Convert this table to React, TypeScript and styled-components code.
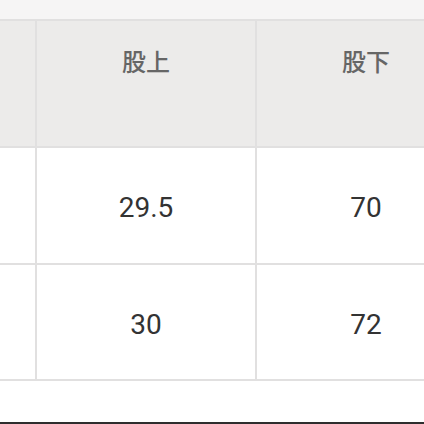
import React from "react";
import styled, { createGlobalStyle } from "styled-components";

const Global = createGlobalStyle`
  html, body { margin: 0; padding: 0; background: #ffffff; }
  body { width: 424px; height: 424px; overflow: hidden; font-family: Roboto, "Noto Sans CJK JP", sans-serif; }
`;

const Page = styled.div`
  width: 424px;
  height: 424px;
  display: flex;
  flex-direction: column;
  overflow: hidden;
  background: #ffffff;
`;

const TopStrip = styled.div`
  height: 19px;
  flex: none;
  background: #f6f5f5;
`;

const Viewport = styled.div`
  flex: none;
  overflow: hidden;
  width: 424px;
`;

const Grid = styled.div`
  display: grid;
  grid-template-columns: 218px 218px 218px;
  grid-template-rows: 125px 115px 114px;
  gap: 2px;
  padding: 2px 0;
  margin-left: -183px;
  width: max-content;
  background: #e1e0e0;
`;

const Cell = styled.div<{ $head?: boolean }>`
  display: flex;
  align-items: center;
  justify-content: center;
  background: ${(p) => (p.$head ? "#ecebea" : "#ffffff")};
  color: ${(p) => (p.$head ? "#666666" : "#333333")};
  font-family: ${(p) => (p.$head ? '"Noto Sans CJK JP", sans-serif' : 'Roboto, sans-serif')};
  font-weight: ${(p) => (p.$head ? 500 : 400)};
  font-size: ${(p) => (p.$head ? "24px" : "28px")};
  padding-bottom: ${(p) => (p.$head ? "46px" : "0")};
  padding-top: ${(p) => (p.$head ? "0" : "4px")};
  box-sizing: border-box;
`;

const Filler = styled.div`
  flex: 1;
  background: #ffffff;
`;

const BottomEdge = styled.div`
  height: 2px;
  flex: none;
  background: #2e2e2e;
`;

const rows = [
  ["", "股上", "股下"],
  ["", "29.5", "70"],
  ["", "30", "72"],
];

export default function App() {
  return (
    <>
      <Global />
      <Page>
        <TopStrip />
        <Viewport>
          <Grid>
            {rows.map((r, i) =>
              r.map((c, j) => (
                <Cell key={`${i}-${j}`} $head={i === 0}>
                  {c}
                </Cell>
              ))
            )}
          </Grid>
        </Viewport>
        <Filler />
        <BottomEdge />
      </Page>
    </>
  );
}
